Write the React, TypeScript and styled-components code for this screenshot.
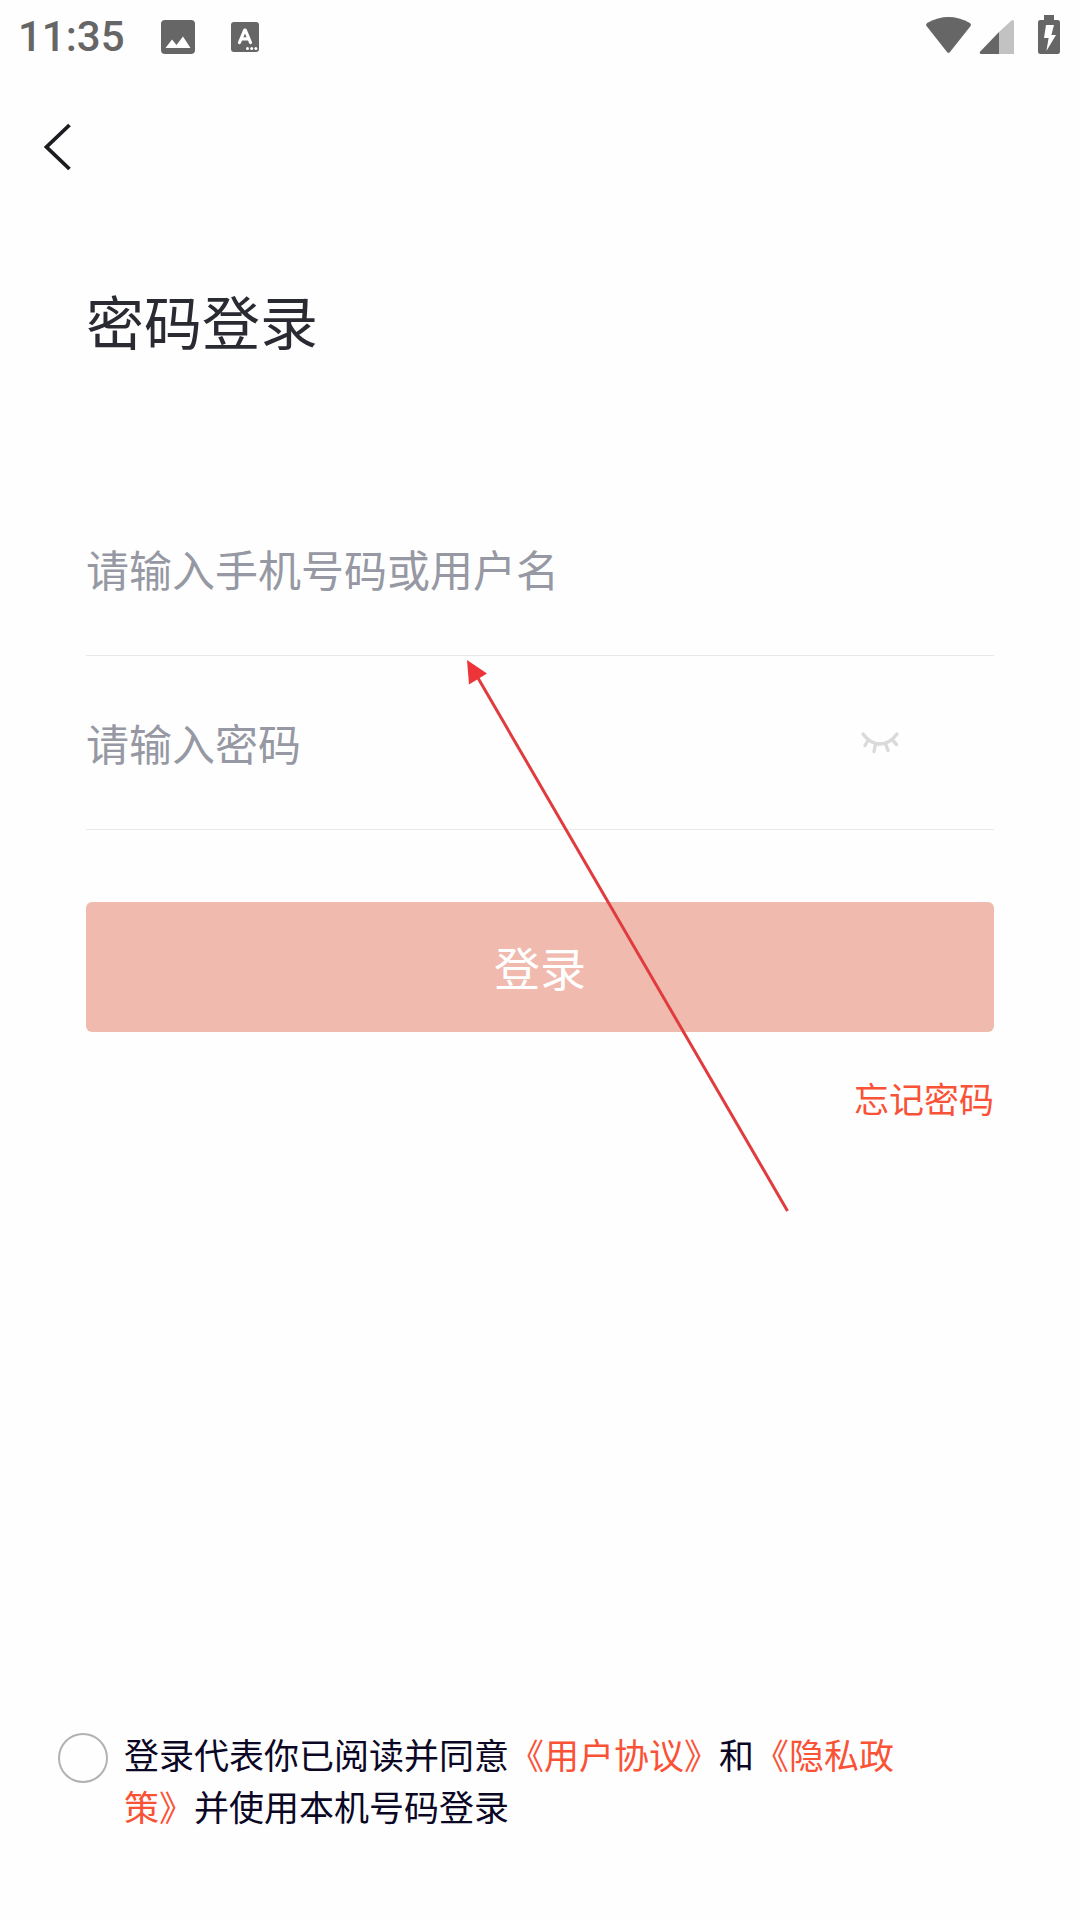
import React, { useState } from "react";
import styled, { createGlobalStyle } from "styled-components";

const GlobalStyle = createGlobalStyle`
  *, *::before, *::after { box-sizing: border-box; }
  body {
    margin: 0;
    background: #fefefe;
    font-family: "Noto Sans CJK SC", sans-serif;
  }
  button, input { font-family: inherit; }
`;

const accent = "#fa5236";

const Page = styled.div`
  position: relative;
  display: flex;
  flex-direction: column;
  min-height: 100vh;
`;

const StatusBar = styled.header`
  display: flex;
  align-items: center;
  justify-content: space-between;
  height: 74px;
  padding: 0 18px;
  color: #666;
`;

const StatusGroup = styled.div`
  display: flex;
  align-items: center;
  gap: 36px;
`;

const Clock = styled.time`
  font-family: Roboto, sans-serif;
  font-size: 42px;
  font-weight: 500;
  line-height: 72px;
`;

const Icon = styled.svg`
  display: block;
  flex: none;
`;

const NavBar = styled.nav`
  display: flex;
  align-items: center;
  height: 146px;
  padding: 0 22px;
`;

const IconButton = styled.button`
  display: flex;
  align-items: center;
  justify-content: center;
  width: 72px;
  height: 72px;
  padding: 0;
  border: 0;
  background: none;
  cursor: pointer;
`;

const Main = styled.main`
  flex: 1;
  padding: 60px 86px 0;
`;

const Title = styled.h1`
  margin: 0 0 122px;
  color: #2a2a33;
  font-size: 58px;
  font-weight: 400;
  line-height: 80px;
`;

const Form = styled.form`
  display: flex;
  flex-direction: column;
`;

const Field = styled.div`
  display: flex;
  align-items: center;
  height: 174px;
  padding-right: 78px;
  border-bottom: 1px solid #e8e8e8;
`;

const TextInput = styled.input`
  flex: 1;
  min-width: 0;
  height: 72px;
  padding: 0 0 2px;
  border: 0;
  outline: 0;
  background: none;
  color: #2a2a33;
  font-size: 43px;
  &::placeholder { color: #9698a3; opacity: 1; }
`;

const SubmitButton = styled.button`
  height: 130px;
  margin-top: 72px;
  padding: 0 0 2px;
  border: 0;
  border-radius: 6px;
  background: #f0baae;
  color: #fff;
  font-size: 46px;
`;

const ForgotLink = styled.a`
  align-self: flex-end;
  margin-top: 40px;
  color: ${accent};
  font-size: 35px;
  line-height: 52px;
  text-decoration: none;
`;

const Agreement = styled.footer`
  display: flex;
  align-items: flex-start;
  gap: 16px;
  padding: 0 160px 88px 58px;
`;

const RoundCheck = styled.input`
  appearance: none;
  flex: none;
  width: 50px;
  height: 50px;
  margin: 5px 0 0;
  border: 2px solid #b2b2b2;
  border-radius: 50%;
  &:checked { border-color: ${accent}; background: ${accent}; }
`;

const AgreementText = styled.label`
  color: #0b0725;
  font-size: 35px;
  line-height: 52px;
`;

const DocLink = styled.a`
  color: ${accent};
  text-decoration: none;
`;

const Pointer = styled.svg`
  position: absolute;
  top: 660px;
  left: 466px;
  pointer-events: none;
`;

export default function App() {
  const [visible, setVisible] = useState(false);

  return (
    <Page>
      <GlobalStyle />
      <StatusBar>
        <StatusGroup>
          <Clock>11:35</Clock>
          <Icon width="34" height="34" viewBox="0 0 34 34">
            <rect width="34" height="34" rx="4" fill="#666" />
            <path d="M4.500 28 11 19.500l4.500 5.500 6.500-8.500L29.500 28Z" fill="#fff" />
          </Icon>
          <Icon width="28" height="30" viewBox="0 0 28 30">
            <rect width="28" height="30" rx="3" fill="#666" />
            <path d="m8.500 20.500 5.200-12.300h.6l5.200 12.300M10.500 16.800h7" fill="none" stroke="#fff" strokeWidth="3.200" strokeLinecap="round" strokeLinejoin="round" />
            <circle cx="16.500" cy="26.500" r="1.500" fill="#fff" />
            <circle cx="20.700" cy="26.500" r="1.500" fill="#fff" />
            <circle cx="24.900" cy="26.500" r="1.500" fill="#fff" />
          </Icon>
        </StatusGroup>
        <Icon width="136" height="44" viewBox="0 0 136 44">
          <path d="M.9 11.500Q-.9 9.200 1.500 7.700Q22.500-3.700 43.500 7.700Q46 9.200 44.200 11.500L24 37Q22.500 38.700 21 37Z" fill="#666" />
          <path d="M73 17v22H55.500q-3-.3-1-2.700Z" fill="#666" />
          <path d="M73 17 85.200 5.800q2.500-1.800 2.800.8V39H73Z" fill="#c2c2c2" />
          <path d="M118 5V0h10v5h3.700q2.300 0 2.300 2.300v29.400q0 2.300-2.300 2.300h-17.400q-2.300 0-2.300-2.300V7.300q0-2.300 2.300-2.300Z" fill="#666" />
          <path d="M120 10h8l-2.600 10h4.600l-9.600 16 2.200-13H118Z" fill="#fff" />
        </Icon>
      </StatusBar>

      <NavBar>
        <IconButton type="button" aria-label="返回">
          <Icon width="28" height="48" viewBox="0 0 28 48">
            <path d="M25.500 2 2.500 24l23 22" fill="none" stroke="#1b1b20" strokeWidth="3.800" />
          </Icon>
        </IconButton>
      </NavBar>

      <Main>
        <Title>密码登录</Title>
        <Form onSubmit={(e) => e.preventDefault()}>
          <Field>
            <TextInput type="text" aria-label="请输入手机号码或用户名" placeholder="请输入手机号码或用户名" />
          </Field>
          <Field>
            <TextInput type={visible ? "text" : "password"} aria-label="请输入密码" placeholder="请输入密码" />
            <IconButton type="button" aria-label="显示密码" onClick={() => setVisible(!visible)}>
              <Icon width="40" height="24" viewBox="0 0 40 24">
                <path d="M3 3q7.500 10 17 10T37 3M8.500 8.500 5 14.500M15.500 13 14 20.500M25.500 12.500 28 19.500M32 8.500l4.500 5" fill="none" stroke="#dadada" strokeWidth="3.400" strokeLinecap="round" />
              </Icon>
            </IconButton>
          </Field>
          <SubmitButton type="submit">登录</SubmitButton>
          <ForgotLink href="#forgot">忘记密码</ForgotLink>
        </Form>
      </Main>

      <Agreement>
        <RoundCheck id="agree" type="checkbox" />
        <AgreementText htmlFor="agree">
          登录代表你已阅读并同意<DocLink href="#terms">《用户协议》</DocLink>和<DocLink href="#privacy">《隐私政策》</DocLink>并使用本机号码登录
        </AgreementText>
      </Agreement>

      <Pointer width="326" height="554" viewBox="0 0 326 554" aria-hidden="true">
        <path d="M12 18 321.500 551" stroke="#e03c3f" strokeWidth="3" />
        <path d="M1 0 21 13.500 3 24.500Z" fill="#ed3439" />
      </Pointer>
    </Page>
  );
}
